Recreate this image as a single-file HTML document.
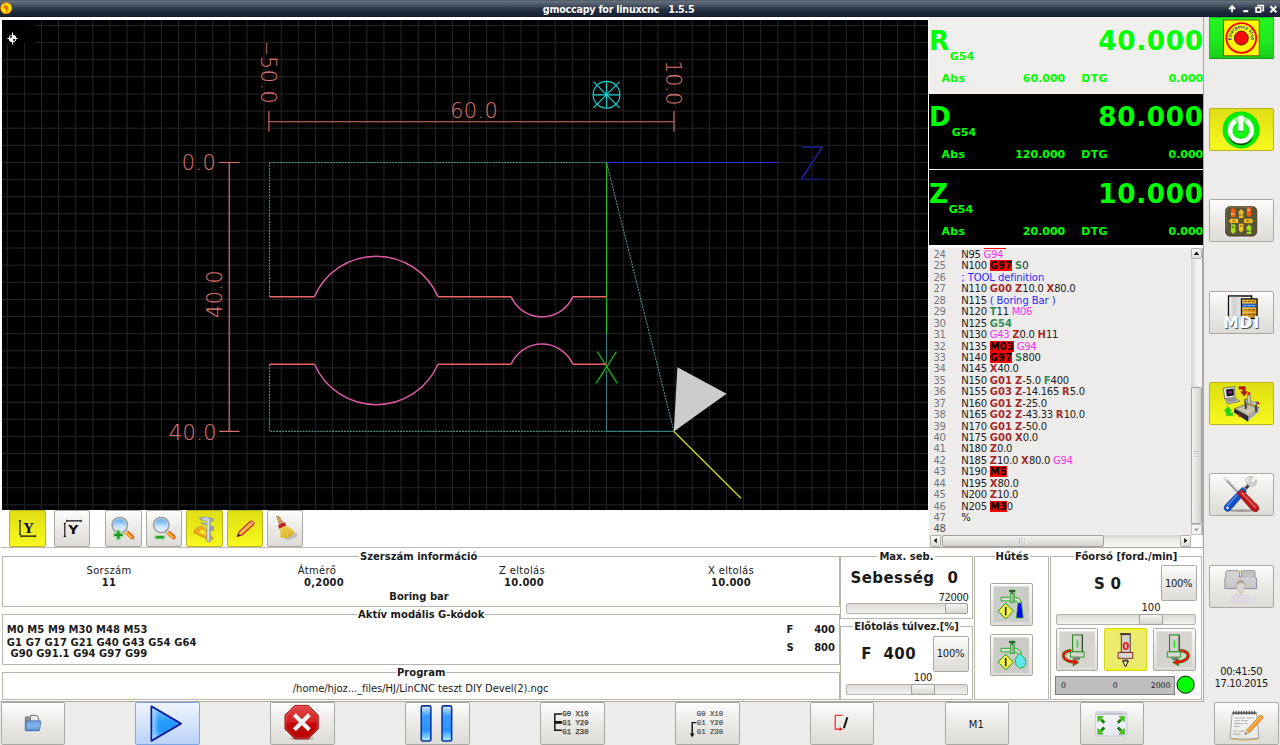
<!DOCTYPE html>
<html lang="hu"><head><meta charset="utf-8"><title>gmoccapy for linuxcnc 1.5.5</title>
<style>
html,body{margin:0;padding:0}
body{width:1280px;height:745px;overflow:hidden;position:relative;background:#edeceb;
 font-family:"DejaVu Sans","Liberation Sans",sans-serif;font-size:10px;color:#1a1a1a}
body>*{position:absolute}
#tb{left:0;top:0;width:1280px;height:17px;background:linear-gradient(#4d5865 0,#626e7b 1.5px,#4a5665 5px,#2a3647 9px,#1c2738 13px,#18233a 15.5px,#0c1524 17px)}
#tb>*{position:absolute}
.appico{left:0;top:0}
#tbt{left:418.6px;top:3.8px;width:400px;text-align:center;color:#fff;font-weight:bold;font-size:9.6px;letter-spacing:-.24px;white-space:pre;text-shadow:0 .6px .6px rgba(0,0,0,.5)}
#tbi{left:1220px;top:0}
#white{left:0;top:17px;width:1203px;height:684px;background:#fff}
#rcol{left:1203px;top:17px;width:77px;height:728px;background:#edeceb}
#ol1{left:1203px;top:17px;width:1px;height:685px;background:#a9a8a4}
#ol2{left:0;top:701px;width:1204px;height:1px;background:#a9a8a4}
#bbar{left:0;top:701px;width:1280px;height:45px;background:#edeceb}
#cv{left:2px;top:20px;width:926px;height:490px;background:#000;overflow:hidden}
#sep1{left:1px;top:547px;width:928px;height:1px;background:#bdbcb6}
#sep2{left:929px;top:547px;width:274px;height:1px;background:#a8a6a1}
.dro{left:928.9px;width:274.4px;height:76px;background:#f0efee;color:#00ff00;font-weight:bold;overflow:hidden}
.dro.dk{background:#000;height:75.6px}
.wl{left:928.9px;width:274.3px;height:1.2px;background:#f4f4f4}
.dro>*{position:absolute;white-space:pre}
.dro .ax{left:0px;top:8.3px;font-size:26.4px;line-height:31px}
.dro .g54{top:33.3px;font-size:11px;line-height:13px}
.dro .big{right:-.5px;top:8.3px;font-size:26.4px;line-height:31px;letter-spacing:.62px}
.dro .lab,.dro .val{top:55.3px;font-size:11px;line-height:13px}
.dro .lab{letter-spacing:.3px}
.btn{box-sizing:border-box;border:1px solid #a9a8a3;border-radius:1.8px;background:linear-gradient(#fdfdfc,#ecebe8 45%,#dddcd8);overflow:hidden}
.btn>svg{position:absolute;left:0;top:0}
.btn.y{background:linear-gradient(#dede14,#eaea18 45%,#f9f920);border-color:#b8b420;border-radius:2px}
.btn.y2{background:#ecec6c;border-color:#d6d620;box-shadow:inset 0 0 0 1.2px #f6f614}
.btn.g{background:linear-gradient(#22f422,#20ea20 55%,#18cc18);border-color:#1ec81e #1ec81e #159a15;border-radius:1px}
.btn.h{background:linear-gradient(#eef4ff,#d6e4fb 50%,#b9d2f7);border-color:#7ea7e6}
.fr{box-sizing:border-box;border:1px solid #b7b6ac;background:#fff}
.ft{position:absolute;top:-6.5px;background:#fff;font-weight:bold;font-size:10px;line-height:12px;padding:0 1px;white-space:pre}
.t{white-space:pre;line-height:12px;font-size:10px}
.t.c{text-align:center}.t.r{text-align:right}.t.b{font-weight:bold}
.big15{font-size:15px;line-height:18px}
.pc{position:absolute;left:0;right:0;top:11.5px;text-align:center;font-size:10px;line-height:12px;letter-spacing:-.3px}
.m1{position:absolute;left:-1.8px;right:0;top:15.6px;text-align:center;font-size:10px;line-height:12px}
.sl{box-sizing:border-box;border:1px solid #b3b2ad;border-radius:2px;background:linear-gradient(#dcdbd7,#f2f1ef)}
.sl>i{position:absolute;top:-1px;bottom:-1px;box-sizing:border-box;border:1px solid #a3a29c;border-radius:2px;background:linear-gradient(#f4f4f2,#d9d8d4)}
.bar{box-sizing:border-box;border:1px solid #7e7e7e;background:#bebebe;font-size:7.8px;letter-spacing:-.1px}
.bar>span{position:absolute;top:4.4px;line-height:10px}
.ledbg{left:1176.3px;top:675.6px;width:19.4px;height:18.9px;background:#f1f0ef}

#code{left:929px;top:247.6px;width:274px;height:299.2px;background:#edecea;overflow:hidden}
#code>*{position:absolute}
#code .ln{left:0;width:16.6px;text-align:right;color:#767676;white-space:pre;letter-spacing:-.36px;font-size:10px}
#code .ln.cur{color:#505050}
#code .cl{left:32.3px;white-space:pre;letter-spacing:-.28px;font-size:10px;color:#1c1c1c}
#code .cm{color:#ff2cf4}
#code .cc{color:#2a2aff;letter-spacing:-.08px}
#code .cr{color:#a52a2a;font-weight:bold;letter-spacing:.1px}
#code .cg{color:#2e8b57;font-weight:bold;letter-spacing:.1px}
#code .ch{background:#fe0000;color:#000;font-weight:bold;letter-spacing:.1px}
#vsb{left:262.4px;top:0;width:10.4px;height:287px;background:linear-gradient(90deg,#d6d5d1,#efeeec 50%,#f6f6f4);border-right:1px solid #a9a8a4}
#vsb>*,#hsb>*{position:absolute;box-sizing:border-box}
.sbb{border:1px solid #b2b1ac;border-radius:1.5px;background:linear-gradient(#fbfbfa,#dedcd8)}
.sbt{border:1px solid #a3a29d;border-radius:2px}
#hsb{left:0;top:287.8px;width:262.2px;height:11.2px;background:linear-gradient(#d6d5d1,#efeeec 50%,#f6f6f4)}
#cnr{left:262.3px;top:287.5px;width:11px;height:12px;background:#fff}

</style></head>
<body>

<div id="tb">
  <svg class="appico" width="18" height="17" viewBox="0 0 18 17"><circle cx="6.2" cy="8.2" r="5.6" fill="#ffee00" stroke="#e46a10" stroke-width=".9"/><text x="5.2" y="9.4" font-size="5.6" font-weight="bold" fill="#ff2400" text-anchor="middle" font-family="DejaVu Sans, Liberation Sans, sans-serif" transform="rotate(28 6.2 8.2)">N</text><text x="8" y="11.6" font-size="5" font-weight="bold" fill="#ff4a00" text-anchor="middle" font-family="DejaVu Sans, Liberation Sans, sans-serif" transform="rotate(28 6.2 8.2)">S</text></svg>
  <div id="tbt">gmoccapy for linuxcnc&nbsp;&nbsp; 1.5.5</div>
  <svg id="tbi" width="60" height="17" viewBox="1220 0 60 17">
    <g fill="none" stroke="#fff" stroke-width="1.9">
      <path d="M1232.1 12.2V6.6M1229.2 9.2l2.9-3 2.9 3" stroke-linejoin="miter"/>
      <path d="M1243.2 11.2h5" stroke-width="2.1"/>
      <path d="M1258.2 6.6v-1.2h5.2v5h-1.4" stroke-width="1.5"/>
      <rect x="1256.1" y="7.6" width="4.6" height="4.4" stroke-width="1.7"/>
      <path d="M1270.4 6.2l6 6M1276.4 6.2l-6 6" stroke-width="2"/>
    </g>
  </svg>
</div><div id="white"></div>
<div id="rcol"></div><div id="bbar"></div><div id="ol1"></div><div id="ol2"></div>
<div id="cv"><svg width="926" height="490" viewBox="2 20 926 490" style="display:block" font-family="DejaVu Sans, Liberation Sans, sans-serif"><path d="M7.28 20V510M24.40 20V510M41.52 20V510M58.64 20V510M75.76 20V510M92.89 20V510M110.01 20V510M127.13 20V510M144.25 20V510M161.37 20V510M178.50 20V510M195.62 20V510M212.74 20V510M229.86 20V510M246.99 20V510M264.11 20V510M281.23 20V510M298.35 20V510M315.47 20V510M332.60 20V510M349.72 20V510M366.84 20V510M383.96 20V510M401.08 20V510M418.21 20V510M435.33 20V510M452.45 20V510M469.57 20V510M486.70 20V510M503.82 20V510M520.94 20V510M538.06 20V510M555.18 20V510M572.31 20V510M589.43 20V510M606.55 20V510M623.67 20V510M640.79 20V510M657.92 20V510M675.04 20V510M692.16 20V510M709.28 20V510M726.40 20V510M743.53 20V510M760.65 20V510M777.77 20V510M794.89 20V510M812.02 20V510M829.14 20V510M846.26 20V510M863.38 20V510M880.50 20V510M897.63 20V510M914.75 20V510M2 25.47H928M2 42.60H928M2 59.72H928M2 76.84H928M2 93.96H928M2 111.08H928M2 128.21H928M2 145.33H928M2 162.45H928M2 179.57H928M2 196.69H928M2 213.82H928M2 230.94H928M2 248.06H928M2 265.18H928M2 282.30H928M2 299.43H928M2 316.55H928M2 333.67H928M2 350.79H928M2 367.92H928M2 385.04H928M2 402.16H928M2 419.28H928M2 436.40H928M2 453.53H928M2 470.65H928M2 487.77H928M2 504.89H928" stroke="#262626" stroke-width="1" fill="none"/><rect x="2" y="20" width="33" height="23" fill="#000" opacity=".88"/><g transform="translate(12.5 38.4)"><circle r="3.75" fill="#fff"/><path d="M-.7 -.7V-2.9A2.3 2.3 0 0 0 -2.9 -.7ZM.7 .7V2.9A2.3 2.3 0 0 0 2.9 .7Z" fill="#000"/><path d="M-5.2 0H5.2M0 -5.9V6.1" stroke="#fff" stroke-width="1"/></g><g fill="none" stroke="#528f8c" stroke-width="1.15" stroke-dasharray="1.9 1.05"><path d="M269.50 296.67V162.45H606.55L673.96 431.39"/><path d="M269.50 364.28V431.39H606.55"/></g><path d="M606.55 333.00V431.39H673.96" fill="none" stroke="#3f7c7c" stroke-width="1.1"/><path d="M606.55 162.45H777.85" stroke="#2e2ed8" stroke-width="1.15"/><path d="M606.55 162.45V333.45" stroke="#24b824" stroke-width="1.3"/><text x="812.1" y="179.6" font-size="45.6" font-weight="200" fill="#3a3aff" stroke="#000" stroke-width="1.0" text-anchor="middle" transform="translate(812.1 0) scale(.83 1) translate(-812.1 0)" style="font-family:'DejaVu Sans Light','DejaVu Sans',sans-serif">Z</text><text x="606.5" y="384.4" font-size="44.4" font-weight="200" fill="#22d422" stroke="#000" stroke-width="0.9" text-anchor="middle" transform="translate(606.5 0) scale(.96 1) translate(-606.5 0)" style="font-family:'DejaVu Sans Light','DejaVu Sans',sans-serif">X</text><path d="M269.50 296.67H314.46M438.02 296.67H511.06M572.84 296.67H606.55" stroke="#ea6460" stroke-width="1.5" fill="none"/><path d="M314.46 296.67A67.41 67.41 0 0 1 438.02 296.67M511.06 296.67A33.70 33.70 0 0 0 572.84 296.67" stroke="#dc5aa6" stroke-width="1.5" fill="none"/><path d="M269.50 364.28H314.46M438.02 364.28H511.06M572.84 364.28H606.55" stroke="#ea6460" stroke-width="1.5" fill="none"/><path d="M314.46 364.28A67.41 67.41 0 0 0 438.02 364.28M511.06 364.28A33.70 33.70 0 0 1 572.84 364.28" stroke="#dc5aa6" stroke-width="1.5" fill="none"/><g stroke="#d9706f" stroke-width="1.15" fill="none"><path d="M268.90 121.7H673.96M268.90 111.3V131.4M673.96 111.3V131.4"/><path d="M229.2 162.45V431.39M219.2 162.45H239.4M219.2 431.39H239.4"/></g><text x="474.2" y="117.5" font-size="20.8" font-weight="200" fill="#d9706f" stroke="#d9706f" stroke-width=".12" text-anchor="middle" style="font-family:'DejaVu Sans Light','DejaVu Sans',sans-serif" letter-spacing="0.45">60.0</text><text x="198.9" y="170.2" font-size="20.8" font-weight="200" fill="#d9706f" stroke="#d9706f" stroke-width=".12" text-anchor="middle" style="font-family:'DejaVu Sans Light','DejaVu Sans',sans-serif" letter-spacing="0.45">0.0</text><text x="192.9" y="439.6" font-size="20.8" font-weight="200" fill="#d9706f" stroke="#d9706f" stroke-width=".12" text-anchor="middle" style="font-family:'DejaVu Sans Light','DejaVu Sans',sans-serif" letter-spacing="0.45">40.0</text><text x="221.8" y="293.9" font-size="20.8" font-weight="200" fill="#d9706f" stroke="#d9706f" stroke-width=".12" text-anchor="middle" transform="rotate(-90 221.8 293.9)" style="font-family:'DejaVu Sans Light','DejaVu Sans',sans-serif" letter-spacing="0.45">40.0</text><text x="261.0" y="80.1" font-size="20.8" font-weight="200" fill="#d9706f" stroke="#d9706f" stroke-width=".12" text-anchor="middle" transform="rotate(90 261.0 80.1)" style="font-family:'DejaVu Sans Light','DejaVu Sans',sans-serif" letter-spacing="0.45">50.0</text><text x="0" y="0" font-size="20.8" font-weight="200" fill="#d9706f" text-anchor="middle" transform="translate(261 48.4) rotate(90) scale(2.05 1)" style="font-family:'DejaVu Sans Light','DejaVu Sans',sans-serif">-</text><text x="665.5" y="82.7" font-size="20.8" font-weight="200" fill="#d9706f" stroke="#d9706f" stroke-width=".12" text-anchor="middle" transform="rotate(90 665.5 82.7)" style="font-family:'DejaVu Sans Light','DejaVu Sans',sans-serif" letter-spacing="-0.4">10.0</text><g stroke="#14d2d2" stroke-width="1.15" fill="none"><circle cx="606.5" cy="94.8" r="13.4"/><path d="M593.1 94.8H619.9M606.5 81.39999999999999V108.2M593.368 81.66799999999999L619.632 107.932M593.368 107.932L619.632 81.66799999999999"/></g><path d="M673.8 431.4L677.4 367.2L726.6 393.8Z" fill="#cccccc"/><path d="M673.9 431.6L741 498.3" stroke="#d2d212" stroke-width="1.4"/></svg></div>

<div class="dro" style="top:17px">
  <span class="ax">R</span><span class="g54" style="left:20.900000000000002px">G54</span>
  <span class="big">40.000</span>
  <span class="lab" style="left:12.6px">Abs</span><span class="val" style="right:138px">60.000</span>
  <span class="lab" style="left:152.4px">DTG</span><span class="val" style="right:0px">0.000</span>
</div>
<div class="dro dk" style="top:93.2px">
  <span class="ax">D</span><span class="g54" style="left:22.900000000000002px">G54</span>
  <span class="big">80.000</span>
  <span class="lab" style="left:12.6px">Abs</span><span class="val" style="right:138px">120.000</span>
  <span class="lab" style="left:152.4px">DTG</span><span class="val" style="right:0px">0.000</span>
</div>
<div class="dro dk" style="top:169.5px">
  <span class="ax">Z</span><span class="g54" style="left:19.900000000000002px">G54</span>
  <span class="big">10.000</span>
  <span class="lab" style="left:12.6px">Abs</span><span class="val" style="right:138px">20.000</span>
  <span class="lab" style="left:152.4px">DTG</span><span class="val" style="right:0px">0.000</span>
</div><div class="wl" style="top:92px;height:2px"></div><div class="wl" style="top:168.8px"></div><div class="wl" style="top:244.9px;height:2.7px;background:#fff"></div>
<div id="code">
<div style="left:54.6px;top:.6px;width:22px;height:1px;background:#fe0000"></div>
<div class="ln" style="top:1.45px;line-height:11.435px">24</div>
<div class="cl" style="top:1.45px;line-height:11.435px">N95 <span class="cm">G94</span></div>
<div class="ln" style="top:12.89px;line-height:11.435px">25</div>
<div class="cl" style="top:12.89px;line-height:11.435px">N100 <span class="ch">G97</span> <span class="cg">S</span>0</div>
<div class="ln" style="top:24.32px;line-height:11.435px">26</div>
<div class="cl" style="top:24.32px;line-height:11.435px"><span class="cc">; TOOL definition</span></div>
<div class="ln" style="top:35.76px;line-height:11.435px">27</div>
<div class="cl" style="top:35.76px;line-height:11.435px">N110 <span class="cr">G00</span> <span class="cr">Z</span>10.0 <span class="cr">X</span>80.0</div>
<div class="ln" style="top:47.19px;line-height:11.435px">28</div>
<div class="cl" style="top:47.19px;line-height:11.435px">N115 <span class="cc">( Boring Bar )</span></div>
<div class="ln" style="top:58.63px;line-height:11.435px">29</div>
<div class="cl" style="top:58.63px;line-height:11.435px">N120 <span class="cg">T</span>11 <span class="cm">M06</span></div>
<div class="ln" style="top:70.06px;line-height:11.435px">30</div>
<div class="cl" style="top:70.06px;line-height:11.435px">N125 <span class="cg">G54</span></div>
<div class="ln" style="top:81.50px;line-height:11.435px">31</div>
<div class="cl" style="top:81.50px;line-height:11.435px">N130 <span class="cm">G43</span> <span class="cr">Z</span>0.0 <span class="cr">H</span>11</div>
<div class="ln" style="top:92.93px;line-height:11.435px">32</div>
<div class="cl" style="top:92.93px;line-height:11.435px">N135 <span class="ch">M03</span> <span class="cm">G94</span></div>
<div class="ln" style="top:104.37px;line-height:11.435px">33</div>
<div class="cl" style="top:104.37px;line-height:11.435px">N140 <span class="ch">G97</span> <span class="cg">S</span>800</div>
<div class="ln" style="top:115.80px;line-height:11.435px">34</div>
<div class="cl" style="top:115.80px;line-height:11.435px">N145 <span class="cr">X</span>40.0</div>
<div class="ln" style="top:127.24px;line-height:11.435px">35</div>
<div class="cl" style="top:127.24px;line-height:11.435px">N150 <span class="cr">G01</span> <span class="cr">Z</span>-5.0 <span class="cg">F</span>400</div>
<div class="ln" style="top:138.67px;line-height:11.435px">36</div>
<div class="cl" style="top:138.67px;line-height:11.435px">N155 <span class="cr">G03</span> <span class="cr">Z</span>-14.165 <span class="cr">R</span>5.0</div>
<div class="ln" style="top:150.11px;line-height:11.435px">37</div>
<div class="cl" style="top:150.11px;line-height:11.435px">N160 <span class="cr">G01</span> <span class="cr">Z</span>-25.0</div>
<div class="ln" style="top:161.54px;line-height:11.435px">38</div>
<div class="cl" style="top:161.54px;line-height:11.435px">N165 <span class="cr">G02</span> <span class="cr">Z</span>-43.33 <span class="cr">R</span>10.0</div>
<div class="ln" style="top:172.98px;line-height:11.435px">39</div>
<div class="cl" style="top:172.98px;line-height:11.435px">N170 <span class="cr">G01</span> <span class="cr">Z</span>-50.0</div>
<div class="ln" style="top:184.41px;line-height:11.435px">40</div>
<div class="cl" style="top:184.41px;line-height:11.435px">N175 <span class="cr">G00</span> <span class="cr">X</span>0.0</div>
<div class="ln" style="top:195.85px;line-height:11.435px">41</div>
<div class="cl" style="top:195.85px;line-height:11.435px">N180 <span class="cr">Z</span>0.0</div>
<div class="ln" style="top:207.28px;line-height:11.435px">42</div>
<div class="cl" style="top:207.28px;line-height:11.435px">N185 <span class="cr">Z</span>10.0 <span class="cr">X</span>80.0 <span class="cm">G94</span></div>
<div class="ln" style="top:218.72px;line-height:11.435px">43</div>
<div class="cl" style="top:218.72px;line-height:11.435px">N190 <span class="ch">M5</span></div>
<div class="ln" style="top:230.15px;line-height:11.435px">44</div>
<div class="cl" style="top:230.15px;line-height:11.435px">N195 <span class="cr">X</span>80.0</div>
<div class="ln" style="top:241.59px;line-height:11.435px">45</div>
<div class="cl" style="top:241.59px;line-height:11.435px">N200 <span class="cr">Z</span>10.0</div>
<div class="ln" style="top:253.02px;line-height:11.435px">46</div>
<div class="cl" style="top:253.02px;line-height:11.435px">N205 <span class="ch">M3</span>0</div>
<div class="ln" style="top:264.46px;line-height:11.435px">47</div>
<div class="cl" style="top:264.46px;line-height:11.435px">%</div>
<div class="ln cur" style="top:275.89px;line-height:11.435px">48</div>
<div id="vsb"><div class="sbb" style="left:0;top:0;width:10.8px;height:11px"></div><svg style="left:0;top:0" width="11" height="11" viewBox="0 0 11 11"><path d="M2.8 6.9L5.5 3.6L8.2 6.9Z" fill="#111"/></svg><div class="sbt" style="left:0;top:139px;width:10.2px;height:137px;background:linear-gradient(90deg,#f3f3f1,#d3d2ce)"></div><svg style="left:0;top:201px" width="11" height="12" viewBox="0 0 11 12"><path d="M2.6 2.5H8M2.6 4.9H8M2.6 7.3H8" stroke="#aaa9a4" stroke-width=".9"/><path d="M2.6 3.4H8M2.6 5.8H8M2.6 8.2H8" stroke="#fff" stroke-width=".9"/></svg><div style="left:0;top:276px;width:10.4px;height:11px;background:#f4f4f2;border:1px solid #c4c3be"></div><svg style="left:0;top:276px" width="11" height="11" viewBox="0 0 11 11"><path d="M2.9 4.4L5.4 7.2L7.9 4.4Z" fill="#9a9a96"/></svg></div>
<div id="hsb"><div class="sbb" style="left:1px;top:0;width:10.8px;height:11.2px"></div><svg style="left:1px;top:0" width="11" height="11" viewBox="0 0 11 11"><path d="M6.8 2.9L3.7 5.6L6.8 8.3Z" fill="#111"/></svg><div class="sbt" style="left:13.2px;top:0;width:162.2px;height:11.2px;background:linear-gradient(#f3f3f1,#d3d2ce)"></div><svg style="left:88px;top:0" width="12" height="11" viewBox="0 0 12 11"><path d="M2.5 2.8V8.4M4.9 2.8V8.4M7.3 2.8V8.4" stroke="#aaa9a4" stroke-width=".9"/><path d="M3.4 2.8V8.4M5.8 2.8V8.4M8.2 2.8V8.4" stroke="#fff" stroke-width=".9"/></svg><div class="sbb" style="left:250.5px;top:0;width:11.3px;height:11.2px"></div><svg style="left:250.5px;top:0" width="11" height="11" viewBox="0 0 11 11"><path d="M4.2 2.9L7.3 5.6L4.2 8.3Z" fill="#111"/></svg></div>
<div id="cnr"></div>
</div><div class="btn g" style="left:1209px;top:17px;width:65px;height:42px"><svg width="63" height="41" viewBox="0 0 63 41"><rect x="13.4" y="2" width="35.8" height="35.8" fill="#ffff00" stroke="#6a4a10" stroke-width=".9"/><circle cx="31.3" cy="20" r="14.9" fill="none" stroke="#ff0000" stroke-width="1.9"/><circle cx="31.3" cy="20.1" r="7" fill="#ff0808" stroke="#4a1a00" stroke-width=".9"/><path id="esp" d="M21.62 22.16A9.9 9.9 0 1 1 40.98 22.16" fill="none"/><text font-size="4.7" font-weight="bold" fill="#3a3ea0" font-family="DejaVu Sans, Liberation Sans, sans-serif" textLength="34.6" lengthAdjust="spacingAndGlyphs"><textPath href="#esp" startOffset=".2" textLength="34.6" lengthAdjust="spacingAndGlyphs">Emergency Stop</textPath></text></svg></div>
<div class="btn y" style="left:1209px;top:108px;width:65px;height:43px"><svg width="63" height="41" viewBox="0 0 63 41"><defs><radialGradient id="pg" cx=".5" cy=".5" r=".5"><stop offset="0" stop-color="#22f822"/><stop offset=".8" stop-color="#04f004"/><stop offset="1" stop-color="#00e400"/></radialGradient><linearGradient id="pgl" x1="0" y1="0" x2="0" y2="1"><stop offset="0" stop-color="#fff" stop-opacity=".75"/><stop offset="1" stop-color="#fff" stop-opacity=".1"/></linearGradient></defs><circle cx="31.1" cy="20.9" r="18.5" fill="url(#pg)"/><path d="M21 25.8A10.8 10.8 0 0 0 40.8 25.8" fill="none" stroke="#042c04" stroke-width="4.6" transform="translate(0 1.7)" opacity=".85"/><path d="M25.4 12.2A10.8 10.8 0 1 0 36.4 12.2" fill="none" stroke="#fff" stroke-width="4.6"/><path d="M17.6 17.4A13.9 13.9 0 0 1 44.2 17.4Q31 9.6 17.6 17.4Z" fill="url(#pgl)"/><rect x="28.4" y="6.7" width="5" height="15.2" fill="#fff"/><rect x="28.4" y="21.9" width="5" height=".8" fill="#0a5a0a" opacity=".6"/></svg></div>
<div class="btn n" style="left:1209px;top:199px;width:65px;height:43px"><svg width="63" height="41" viewBox="0 0 63 41"><rect x="14.4" y="5.5" width="33.6" height="31.8" rx="5" fill="#fff" opacity=".75"/><rect x="15.6" y="6.7" width="31.2" height="29.4" rx="4.2" fill="#5a5436" stroke="#3a3520" stroke-width=".9"/><path d="M16.4 30V11Q16.4 7.5 20 7.5H43" fill="none" stroke="#8a8258" stroke-width=".8" opacity=".8"/><g transform="translate(23.2 12.2) rotate(0)"><path d="M0 -4.8L3 -1.6999999999999997H2.2V4.8H-2.2V-1.6999999999999997H-3Z" fill="#f45a10"/></g><g transform="translate(31.1 13.5) rotate(0)"><path d="M0 -4.4L3 -1.3000000000000003H2.2V4.4H-2.2V-1.3000000000000003H-3Z" fill="#f2bc22"/></g><g transform="translate(39 12.4) rotate(180)"><path d="M0 -4.8L3 -1.6999999999999997H2.2V4.8H-2.2V-1.6999999999999997H-3Z" fill="#f45a10"/></g><g transform="translate(23.4 20.9) rotate(-90)"><path d="M0 -4.8L3 -1.6999999999999997H2.2V4.8H-2.2V-1.6999999999999997H-3Z" fill="#f2bc22"/></g><g transform="translate(38.8 20.9) rotate(90)"><path d="M0 -4.8L3 -1.6999999999999997H2.2V4.8H-2.2V-1.6999999999999997H-3Z" fill="#f2bc22"/></g><g transform="translate(23.2 29.2) rotate(180)"><path d="M0 -4.8L3 -1.6999999999999997H2.2V4.8H-2.2V-1.6999999999999997H-3Z" fill="#a4e018"/></g><g transform="translate(31.1 28.2) rotate(180)"><path d="M0 -4.4L3 -1.3000000000000003H2.2V4.4H-2.2V-1.3000000000000003H-3Z" fill="#f2bc22"/></g><g transform="translate(39 29.2) rotate(0)"><path d="M0 -4.8L3 -1.6999999999999997H2.2V4.8H-2.2V-1.6999999999999997H-3Z" fill="#a4e018"/></g><g font-size="2.7" font-weight="bold" text-anchor="middle" font-family="DejaVu Sans, Liberation Sans, sans-serif"><text x="23.2" y="14.8" fill="#fff">Z+</text><text x="31.1" y="15.6" fill="#5a4a10">Y+</text><text x="39" y="11.4" fill="#fff">Z-</text><text x="24" y="21.9" fill="#3a3010">X-</text><text x="38.2" y="21.9" fill="#3a3010">X+</text><text x="23.2" y="28.2" fill="#3a5a08">A-</text><text x="31.1" y="27.4" fill="#5a4a10">Y-</text><text x="39" y="32" fill="#2a4a08">A+</text></g></svg></div>
<div class="btn n" style="left:1209px;top:291px;width:65px;height:43px"><svg width="63" height="41" viewBox="0 0 63 41"><defs><linearGradient id="mdp" x1="0" y1="0" x2="1" y2="0"><stop offset="0" stop-color="#f2f2f2"/><stop offset=".35" stop-color="#cfcfcf"/><stop offset="1" stop-color="#e6e6e6"/></linearGradient><linearGradient id="mdo" x1="0" y1="0" x2="1" y2="1"><stop offset="0" stop-color="#f6cc60"/><stop offset=".5" stop-color="#e8a428"/><stop offset="1" stop-color="#b87410"/></linearGradient></defs><path d="M18.6 28V4H41.6V7" fill="none" stroke="#0a0a0a" stroke-width="1.5"/><rect x="19.4" y="4.8" width="12" height="23" fill="url(#mdp)"/><rect x="31.5" y="6.9" width="15.6" height="19.6" fill="url(#mdo)" stroke="#0a0a0a" stroke-width="1.3"/><rect x="32.2" y="11.6" width="14.2" height="3.7" fill="#1e62c8"/><path d="M33.6 9.4h11.4M33.6 17.8h11.4M33.6 22.4h11.4" stroke="#5a3a08" stroke-width="1" stroke-dasharray="3 1.1" opacity=".75"/><path d="M33.6 13.5h11.4" stroke="#cfe0ff" stroke-width=".8" stroke-dasharray="3 1.1" opacity=".8"/><path d="M32.2 16.2h14.2M32.2 20.4h14.2" stroke="#fbe6a8" stroke-width=".6" opacity=".8"/><text x="32.5" y="37" font-size="15.6" font-weight="bold" fill="#1a1a1a" text-anchor="middle" font-family="DejaVu Sans, Liberation Sans, sans-serif" opacity=".78" letter-spacing=".9">MDI</text><text x="31.7" y="36.1" font-size="15.6" font-weight="bold" fill="#fff" text-anchor="middle" font-family="DejaVu Sans, Liberation Sans, sans-serif" letter-spacing=".9">MDI</text></svg></div>
<div class="btn y" style="left:1209px;top:382px;width:65px;height:43px"><svg width="63" height="41" viewBox="0 0 63 41"><path d="M13.2 5.3L24.6 3.6L24.9 14.7L14.8 15.7Z" fill="#ececec" stroke="#4a4a4a" stroke-width=".7"/><path d="M16 6.6L23.6 5.4L23.9 12.6L16.8 13.6Z" fill="#14141e"/><path d="M18.6 8.2L21.8 7.7L22 10.6L18.8 11.1Z" fill="#8a1e9a"/><path d="M14.8 15.7L24.9 14.7L30 18.4L17.6 21.1Z" fill="#b4b8c0" stroke="#5a5a5a" stroke-width=".6"/><path d="M16.6 16.6L24.4 15.8L27 17.6L18.4 19Z" fill="#8a8e96"/><path d="M28.9 3.6H35.4V8.6H37.6L34 13.2L30.6 8.6H32.8V6.2H28.9Z" fill="#b81414" stroke="#8a0a0a" stroke-width=".3"/><path d="M22.8 32.6H16.2V28.2H14.2L17.9 23.4L21.6 28.2H19.6V29.8H22.8Z" fill="#14d814" stroke="#0a9a0a" stroke-width=".3"/><path d="M24.6 25.7L36.3 21L49.1 24.7L37.7 32.8Z" fill="#cfc8aa" stroke="#3a3a3a" stroke-width=".6"/><path d="M28 25.6L36.6 22.2L45.6 24.8L37.4 30.6Z" fill="#ddd8c0" stroke="#8a8670" stroke-width=".4"/><path d="M31 24.4L40.4 27.6M34 23.2L43.2 26.2M30.4 27.2L39 23M33.4 29L42.4 24" stroke="#8a8670" stroke-width=".4"/><path d="M24.6 25.7L37.7 32.8V38.4L24.6 29.8Z" fill="#2e2e32"/><path d="M37.7 32.8L49.1 24.7V28.6L37.7 38.4Z" fill="#c4c4c8"/><path d="M38.4 34.2L48.6 26.8M38.4 36.2L48.6 28.2" stroke="#6a6a70" stroke-width=".6"/><path d="M24.8 26.4V30M37.7 33V38.2" stroke="#1a1a1a" stroke-width="1.2"/><path d="M34.2 16.6L36.2 15.4L37 25.4L35 26.6Z" fill="#3e3e44"/><path d="M44.6 19.2L46.8 18.2L47.4 28.4L45.2 29.6Z" fill="#3e3e44"/><path d="M35.4 16.4L46.6 19.6L46.8 22.4L35.6 19.2Z" fill="#c8c8cc" stroke="#4a4a4a" stroke-width=".4"/><path d="M37.2 11.6L40.4 12.4L40.8 21.4L37.6 20.4Z" fill="#cdc6a8" stroke="#4a4a4a" stroke-width=".5"/><circle cx="39" cy="10.6" r="1.5" fill="#d41a1a"/><circle cx="48" cy="20.2" r="1.4" fill="#d41a1a"/><path d="M28.4 30.6L30.4 31.8V34.6L28.4 33.4Z" fill="#d41a1a"/></svg></div>
<div class="btn n" style="left:1209px;top:473px;width:65px;height:43px"><svg width="63" height="41" viewBox="0 0 63 41"><defs><linearGradient id="tlb" x1="0" y1="0" x2="1" y2="1"><stop offset="0" stop-color="#3a7af0"/><stop offset=".5" stop-color="#1450c8"/><stop offset="1" stop-color="#0a3aa0"/></linearGradient><linearGradient id="tlr" x1="1" y1="0" x2="0" y2="1"><stop offset="0" stop-color="#e84040"/><stop offset=".5" stop-color="#c01818"/><stop offset="1" stop-color="#8a0c0c"/></linearGradient></defs><ellipse cx="31.4" cy="36.6" rx="13" ry="1.3" fill="#000" opacity=".3"/><path d="M14.6 4L28.6 18.6" stroke="#8e8e8e" stroke-width="2.3" stroke-linecap="round"/><path d="M15.4 4L28.8 18" stroke="#e2e2e2" stroke-width=".9"/><path d="M13.8 3L16.6 6" stroke="#f4f4f4" stroke-width="1.8" stroke-linecap="round"/><path d="M34.4 15.2L39.4 10.4" stroke="#8a8a8a" stroke-width="3.6"/><path d="M36 14.4L38.6 11.8" stroke="#3a3a3a" stroke-width="2.2"/><path d="M36.6 8.2Q34.4 4.4 38.8 2.6Q41.6 1.8 43.4 3.2L40.2 5.8L41.2 8.6L44.6 8.8L46 5.4Q47.4 8 45.6 10.8Q43.2 13.6 39.4 12.4Z" fill="#d4d4d4" stroke="#9a9a9a" stroke-width=".5"/><path d="M37.4 7.6Q36 5 38.8 3.6" stroke="#fff" stroke-width="1" fill="none"/><path d="M32.4 13.2L36.6 17.2L20.4 36.2Q17.6 38.6 15 36.2Q12.8 33.4 15.6 30.6Z" fill="url(#tlb)" stroke="#0a3290" stroke-width=".5"/><path d="M31.6 16.4L17.4 31.6" stroke="#6aa0ff" stroke-width="1.3" stroke-linecap="round" opacity=".8"/><circle cx="17.5" cy="34" r="1.3" fill="#e8f0ff"/><path d="M27.2 19.6L31.8 15.4L48 31.8Q50.2 35 47.4 37.2Q44.2 38.8 41.6 36Z" fill="url(#tlr)" stroke="#7a0c0c" stroke-width=".5"/><path d="M32 19.4L45.6 33.6" stroke="#ff9a9a" stroke-width="1.3" stroke-linecap="round" opacity=".7"/><path d="M30.6 16.6L34.6 20.6" stroke="#ff7070" stroke-width="1" opacity=".6"/></svg></div>
<div class="btn n" style="left:1209px;top:565px;width:65px;height:43px"><svg width="63" height="41" viewBox="0 0 63 41"><defs><linearGradient id="usf" x1="0" y1="0" x2="0" y2="1"><stop offset="0" stop-color="#d8d8d8"/><stop offset="1" stop-color="#c6c6c6"/></linearGradient></defs><path d="M14.9 22.6V12.4Q14.9 11.4 15.9 11.4V6.4Q15.9 4.7 17.6 4.7H27.8Q29.5 4.7 29.5 6.4V11.2H31.4V6.4Q31.4 4.7 33.1 4.7H43.3Q45 4.7 45 6.4V11.4Q46.6 11.4 46.6 12.6V22.6Z" fill="url(#usf)" stroke="#8e8e9c" stroke-width="1"/><path d="M32.6 6.2H43.6V10.6H32.6Z" fill="#c2c2c2" stroke="#a2a2aa" stroke-width=".5"/><path d="M30.2 4.4L30.8 6.4L31.4 4.4" stroke="#e8b040" stroke-width=".8" fill="none"/><path d="M20.8 35.6Q21.4 29.8 27.6 28.4L30.8 29.6L34 28.4Q40.4 29.8 41 35.6Q31 37.6 20.8 35.6Z" fill="#dcdce2" stroke="#c4c4d0" stroke-width=".5"/><path d="M28.8 24H32.8V29.4L30.8 30.2L28.8 29.4Z" fill="#d8d0cc"/><ellipse cx="30.8" cy="20.4" rx="4" ry="5.9" fill="#ddd6d2" stroke="#b8b0ac" stroke-width=".5"/><path d="M26.8 19.4Q26.6 14.2 30.8 14Q35 14.2 34.8 19.4Q33.4 16.8 30.8 17Q28.2 16.8 26.8 19.4Z" fill="#a8a096"/><path d="M44.2 30v1.2M44.2 33v1.4M44.2 36v.8" stroke="#c0c0c0" stroke-width=".7"/></svg></div>
<div class="btn y" style="left:9.3px;top:510.3px;width:36.6px;height:36.3px"><svg width="35" height="35" viewBox="0 0 35 35"><text x="18.5" y="21.7" font-size="14.8" font-weight="bold" fill="#0a0a30" text-anchor="middle" font-family="Liberation Serif, DejaVu Serif, serif">Y</text><path d="M10 9.8V23.2M8.9 9.8h2.2M8.9 23.2h2.2" stroke="#111" stroke-width="1.15" fill="none"/><path d="M11 25.1H25.5M11 24v2.2M25.5 24v2.2" stroke="#111" stroke-width="1.15" fill="none"/></svg></div>
<div class="btn n" style="left:53.7px;top:510.3px;width:36.2px;height:36.3px"><svg width="35" height="35" viewBox="0 0 35 35"><text x="0" y="0" font-size="11.5" font-weight="bold" fill="#111" text-anchor="middle" font-family="DejaVu Sans, Liberation Sans, sans-serif" transform="translate(18.3 22.6) scale(1.22 1)">Y</text><path d="M9.8 12.2V25.3M8.7 12.2h2.2M8.7 25.3h2.2" stroke="#111" stroke-width="1.15" fill="none"/><path d="M11.8 9.9H26.2M11.8 8.8v2.2M26.2 8.8v2.2" stroke="#111" stroke-width="1.15" fill="none"/></svg></div>
<div class="btn n" style="left:105.4px;top:510.3px;width:36.2px;height:36.3px"><svg width="35" height="35" viewBox="0 0 35 35"><defs><linearGradient id="zg1" x1="0" y1="0" x2="0" y2="1"><stop offset="0" stop-color="#5aa6f2"/><stop offset=".5" stop-color="#a6d2fa"/><stop offset="1" stop-color="#e4f2ff"/></linearGradient></defs><path d="M19.6 20.4L26.0 26.2" stroke="#e8501a" stroke-width="4.4" stroke-linecap="round"/><path d="M19.3 20.8L25.6 26.5" stroke="#f7b020" stroke-width="2.5" stroke-linecap="round"/><path d="M18.2 18.6L20.8 21.2" stroke="#d8d8d8" stroke-width="3.6"/><circle cx="13.8" cy="14.1" r="7.6" fill="url(#zg1)" stroke="#9c9c9c" stroke-width="1.7"/><circle cx="13.8" cy="14.1" r="6.6" fill="none" stroke="#e4eef8" stroke-width=".6"/><ellipse cx="13.8" cy="16.6" rx="5.4" ry="3.6" fill="#fff" opacity=".3"/><path d="M7.6 22.2h3.1v-3.1h3.4v3.1h3.1v3.4h-3.1v3.1h-3.4v-3.1H7.6Z" fill="#159415" stroke="#a6d8a6" stroke-width="1.3" stroke-linejoin="round"/></svg></div>
<div class="btn n" style="left:145.8px;top:510.3px;width:36.2px;height:36.3px"><svg width="35" height="35" viewBox="0 0 35 35"><defs><linearGradient id="zg2" x1="0" y1="0" x2="0" y2="1"><stop offset="0" stop-color="#5aa6f2"/><stop offset=".5" stop-color="#a6d2fa"/><stop offset="1" stop-color="#e4f2ff"/></linearGradient></defs><path d="M20.0 20.4L26.4 26.2" stroke="#e8501a" stroke-width="4.4" stroke-linecap="round"/><path d="M19.7 20.8L26.0 26.5" stroke="#f7b020" stroke-width="2.5" stroke-linecap="round"/><path d="M18.599999999999998 18.6L21.2 21.2" stroke="#d8d8d8" stroke-width="3.6"/><circle cx="14.2" cy="14.1" r="7.6" fill="url(#zg2)" stroke="#9c9c9c" stroke-width="1.7"/><circle cx="14.2" cy="14.1" r="6.6" fill="none" stroke="#e4eef8" stroke-width=".6"/><ellipse cx="14.2" cy="16.6" rx="5.4" ry="3.6" fill="#fff" opacity=".3"/><rect x="8" y="24.6" width="9.8" height="3.4" rx="1.2" fill="#159415" stroke="#a6d8a6" stroke-width="1.3"/></svg></div>
<div class="btn y" style="left:186.2px;top:510.3px;width:36.6px;height:36.3px"><svg width="35" height="35" viewBox="0 0 35 35"><defs><linearGradient id="cal" x1="0" y1="0" x2="1" y2="0"><stop offset="0" stop-color="#8c9cac"/><stop offset=".45" stop-color="#d4dee8"/><stop offset="1" stop-color="#8090a0"/></linearGradient></defs><path d="M6.2 21.4Q8.4 15.6 15.6 15.2L26.6 27.4L23.4 29.4Z" fill="#f0a81a" stroke="#d88c0c" stroke-width=".7" stroke-linejoin="round"/><path d="M11.6 21.4Q13 18.8 16 18.6L20.6 24.4Z" fill="#f4ec20"/><path d="M8.6 22.6l.8-1M11 24l.8-1M13.4 25.2l.8-1M15.8 26.4l.8-1M18.2 27.6l.8-1M20.6 28.6l.8-1" stroke="#b87408" stroke-width=".7"/><path d="M12.2 7.4Q14 5.6 19 5.9L25.8 7.6L26.2 10.2L23.4 9.6V30.2Q21.6 31.4 19.8 30.2V10.4L13.2 8.6Z" fill="url(#cal)" stroke="#7888a0" stroke-width=".6" stroke-linejoin="round"/><path d="M13.8 11.4L19.8 12.6V14.4L14.2 12.8Z" fill="#a8b6c6" stroke="#7888a0" stroke-width=".5"/><path d="M23.4 15.6H26.6V19.4H23.4Z" fill="#94a4b6" stroke="#7888a0" stroke-width=".5"/><path d="M21.2 8.6V29.6" stroke="#eef3f8" stroke-width=".9"/></svg></div>
<div class="btn y" style="left:226.6px;top:510.3px;width:36.6px;height:36.3px"><svg width="35" height="35" viewBox="0 0 35 35"><path d="M9.2 25.6L11 21L21.6 11Q23.6 9.4 25.2 10.8Q26.6 12.4 25 14.2L14 24Z" fill="#f8b428" stroke="#cc2020" stroke-width="1.1" stroke-linejoin="round"/><path d="M12.4 21.6L22.4 12.2" stroke="#fde6a0" stroke-width="1"/><path d="M22 10.8Q23.8 9.6 25.2 10.9Q26.4 12.4 25.2 14L22 10.8Z" fill="#f4dcd0" stroke="#cc2020" stroke-width=".6"/><path d="M9.2 25.6L10.4 22.4L12.6 24.4Z" fill="#2a2a2a"/></svg></div>
<div class="btn n" style="left:267.1px;top:510.3px;width:36.2px;height:36.3px"><svg width="35" height="35" viewBox="0 0 35 35"><defs><linearGradient id="brm" x1="0" y1="0" x2="1" y2="1"><stop offset="0" stop-color="#f4dc68"/><stop offset=".6" stop-color="#e6c23a"/><stop offset="1" stop-color="#c8a020"/></linearGradient></defs><ellipse cx="23.4" cy="25.6" rx="6.4" ry="2.6" fill="#000" opacity=".16" transform="rotate(-20 23.4 25.6)"/><path d="M8.4 5.4Q10.2 4.2 11.6 6L15 12.2L11.8 14Z" fill="#c8904a" stroke="#a87030" stroke-width=".5"/><path d="M9.6 6L13.4 12.6" stroke="#e0b078" stroke-width="1"/><path d="M10.2 14.6L16.6 11.4L18 14.4L11.6 17.8Z" fill="#cc2020" stroke="#901010" stroke-width=".4"/><path d="M11.6 17.8L18 14.4Q24.6 17.2 26.6 21.6Q23 26.2 17.6 27.2Q14 27.4 12.2 26.4Q12.6 21.6 11.6 17.8Z" fill="url(#brm)"/><path d="M13.6 18.4Q14.6 22.6 14.2 26.6M15.6 17.4Q17.6 21.8 17.6 26.6M17.4 16.4Q21 20.6 21.8 25" stroke="#c09a20" stroke-width=".6" fill="none" opacity=".8"/></svg></div>
<div id="sep1"></div><div id="sep2"></div>

<div class="fr" style="left:2px;top:556px;width:838px;height:51px"><span class="ft" style="left:356px">Szerszám információ</span></div>
<div class="t c" style="left:59px;top:565.1px;width:100px;letter-spacing:.3px">Sorszám</div>
<div class="t c b" style="left:59px;top:577.1px;width:100px;letter-spacing:.2px">11</div>
<div class="t c" style="left:267px;top:565.1px;width:100px;letter-spacing:.3px">Átmérő</div>
<div class="t c b" style="left:274px;top:577.1px;width:100px;letter-spacing:.2px">0,2000</div>
<div class="t c" style="left:472px;top:565.1px;width:100px;letter-spacing:.3px">Z eltolás</div>
<div class="t c b" style="left:474px;top:577.1px;width:100px;letter-spacing:.2px">10.000</div>
<div class="t c" style="left:681px;top:565.1px;width:100px;letter-spacing:.3px">X eltolás</div>
<div class="t c b" style="left:681px;top:577.1px;width:100px;letter-spacing:.2px">10.000</div>
<div class="t c b" style="left:369px;top:590.7px;width:100px">Boring bar</div>

<div class="fr" style="left:2px;top:614px;width:838px;height:51px"><span class="ft" style="left:354px">Aktív modális G-kódok</span></div>
<div class="t b" style="left:6.8px;top:623.8px;letter-spacing:.05px">M0 M5 M9 M30 M48 M53</div>
<div class="t b" style="left:6.8px;top:636.9px;letter-spacing:.08px">G1 G7 G17 G21 G40 G43 G54 G64</div>
<div class="t b" style="left:10.4px;top:648.0px;letter-spacing:.08px">G90 G91.1 G94 G97 G99</div>
<div class="t b" style="left:786.5px;top:624.3px">F</div><div class="t b r" style="left:785px;top:624.3px;width:50px">400</div>
<div class="t b" style="left:786.5px;top:642.0px">S</div><div class="t b r" style="left:785px;top:642.0px;width:50px">800</div>

<div class="fr" style="left:2px;top:672px;width:838px;height:28px"><span class="ft" style="left:393px">Program</span></div>
<div class="t c" style="left:170.7px;top:682.6px;width:500px;letter-spacing:-.06px">/home/hjoz..._files/HJ/LinCNC teszt DIY Devel(2).ngc</div>

<div class="fr" style="left:840px;top:556px;width:133px;height:63px"><span class="ft" style="left:37.4px">Max. seb.</span></div>
<div class="t b big15" style="left:850.6px;top:569.1px;letter-spacing:.4px;word-spacing:-1.25px">Sebesség&nbsp;&nbsp; 0</div>
<div class="t r" style="left:900px;top:591.9px;width:68.6px;letter-spacing:-.32px">72000</div>
<div class="sl" style="left:846.4px;top:603.3px;width:122px;height:11.1px"><i style="left:97.5px;width:23.5px"></i></div>

<div class="fr" style="left:840px;top:626px;width:133px;height:74px"><span class="ft" style="left:12.2px;letter-spacing:-.06px">Előtolás túlvez.[%]</span></div>
<div class="t b big15" style="left:861.2px;top:645px;letter-spacing:.5px">F&nbsp; 400</div>
<div class="btn n" style="left:932.5px;top:635.7px;width:36px;height:36px"><span class="pc">100%</span></div>
<div class="t c" style="left:898px;top:672.4px;width:50px;letter-spacing:-.2px">100</div>
<div class="sl" style="left:846.4px;top:684.3px;width:122px;height:11.1px"><i style="left:63.6px;width:23.6px"></i></div>

<div class="fr" style="left:974px;top:556px;width:75px;height:144px"><span class="ft" style="left:19.6px">Hűtés</span></div>
<div class="btn n" style="left:990.3px;top:583.4px;width:42.5px;height:42.3px"><svg width="40.5" height="40.5" viewBox="0 0 40.5 40.5"><rect x="2.4" y="2.4" width="35.6" height="35.6" fill="#cbcbc8"/><path d="M18 7H24.4" stroke="#12a812" stroke-width="2.4"/><path d="M18.4 7H24" stroke="#2a2a2a" stroke-width="1.2"/><path d="M21.2 7.4V10" stroke="#3a3a3a" stroke-width="1.4"/><path d="M10 13.3H24.4Q27.8 13.5 29.4 16.2L30.4 18.8L27.2 19.6L26.4 17.6Q25.8 16.9 24.4 16.9H10Z" fill="#dededa" stroke="#12a812" stroke-width=".9" stroke-linejoin="round"/><rect x="19.4" y="9.6" width="3.8" height="9" fill="#a4a4a0" stroke="#12a812" stroke-width=".8"/><path d="M20.4 10.4V18" stroke="#d4d4d0" stroke-width=".8"/><path d="M27 19.1H30.4L32.2 33.9H25.4Z" fill="#0808f0" stroke="#12a812" stroke-width=".7"/><path d="M14.7 19.3L22.5 27.1L14.7 34.9L6.9 27.1Z" fill="#f6f04a" stroke="#0a8a0a" stroke-width=".9"/><path d="M14.7 22.9V31.3" stroke="#111" stroke-width="1.5"/></svg></div>
<div class="btn n" style="left:990.3px;top:633.6px;width:42.5px;height:42.4px"><svg width="40.5" height="40.5" viewBox="0 0 40.5 40.5"><rect x="2.4" y="2.4" width="35.6" height="35.6" fill="#cbcbc8"/><path d="M18 7H24.4" stroke="#12a812" stroke-width="2.4"/><path d="M18.4 7H24" stroke="#2a2a2a" stroke-width="1.2"/><path d="M21.2 7.4V10" stroke="#3a3a3a" stroke-width="1.4"/><path d="M10 13.3H24.4Q27.8 13.5 29.4 16.2L30.4 18.8L27.2 19.6L26.4 17.6Q25.8 16.9 24.4 16.9H10Z" fill="#dededa" stroke="#12a812" stroke-width=".9" stroke-linejoin="round"/><rect x="19.4" y="9.6" width="3.8" height="9" fill="#a4a4a0" stroke="#12a812" stroke-width=".8"/><path d="M20.4 10.4V18" stroke="#d4d4d0" stroke-width=".8"/><path d="M28.6 18.6Q27.4 20 25.6 21.6Q23.6 24.4 24.6 27.6Q24.4 30.4 26.6 31.6Q28.6 33.8 31 32.8Q33.6 32.6 34.4 29.8Q35.6 27 34.2 24.4Q33.4 21.4 30.8 20.6Q29.6 19.2 28.6 18.6Z" fill="#62e6f0" stroke="#12a812" stroke-width=".8"/><path d="M14.7 19.3L22.5 27.1L14.7 34.9L6.9 27.1Z" fill="#f6f04a" stroke="#0a8a0a" stroke-width=".9"/><path d="M14.7 22.9V31.3" stroke="#111" stroke-width="1.5"/></svg></div>

<div class="fr" style="left:1050px;top:556px;width:152px;height:144px"><span class="ft" style="left:23px">Főorsó [ford./min]</span></div>
<div class="t b big15" style="left:1093.9px;top:575.2px;letter-spacing:.3px">S 0</div>
<div class="btn n" style="left:1160.6px;top:565.4px;width:36px;height:36px"><span class="pc">100%</span></div>
<div class="t c" style="left:1126px;top:601.5px;width:50px">100</div>
<div class="sl" style="left:1056px;top:614.1px;width:140.4px;height:11.2px"><i style="left:82px;width:23.8px"></i></div>
<div class="btn n" style="left:1055.6px;top:628.1px;width:42.1px;height:42.5px"><svg width="40.2" height="40.5" viewBox="0 0 40.2 40.5"><rect x="2.4" y="2.4" width="35.4" height="35.7" fill="#d5d4cf"/><path d="M14.2 21.4Q6 22.6 6.4 27Q7.4 32.2 17.4 33.2" fill="none" stroke="#0a9a0a" stroke-width="3.3"/><path d="M16.4 29.2L22 33.4L16 36.8Z" fill="#f01414" stroke="#0a9a0a" stroke-width=".7"/><path d="M14.2 21.4Q6 22.6 6.4 27Q7.4 32.2 17.4 33.2" fill="none" stroke="#f01414" stroke-width="2.3"/><rect x="15.6" y="5.9" width="9.7" height="17" fill="#d2d2cc" stroke="#0a7a0a" stroke-width=".9"/><path d="M25.3 6V22.8" stroke="#2a2a2a" stroke-width=".8"/><path d="M20.45 11.7V18.8" stroke="#18e818" stroke-width="1.5"/><rect x="13.6" y="22.9" width="13.5" height="5.2" fill="#d8d8d2" stroke="#0a8a0a" stroke-width=".8"/><path d="M17.1 28.3H23.5L22.6 31.1H18.0Z" fill="#7c7c7c"/></svg></div>
<div class="btn y2" style="left:1104.1px;top:628.1px;width:42.8px;height:42.5px"><svg width="40.8" height="40.5" viewBox="0 0 40.8 40.5"><rect x="1.6" y="1.6" width="37.6" height="37.3" fill="#ecec6c"/><path d="M14.9 4.9H25.7" stroke="#3a0a0a" stroke-width="1.3"/><rect x="16.3" y="5.6" width="8.9" height="17.8" fill="#d2d2cc" stroke="#2a2a2a" stroke-width=".9"/><text x="20.8" y="20.8" font-size="10.4" font-weight="bold" fill="#f41414" text-anchor="middle" font-family="DejaVu Sans, Liberation Sans, sans-serif">0</text><rect x="13.1" y="23.4" width="14.7" height="5.9" fill="#d8d8d2" stroke="#8a1010" stroke-width=".9"/><path d="M17.2 29.4H23.7L23 31.9H17.9Z" fill="#8c8c8c"/><path d="M17.6 32H23.4L20.5 38Z" fill="#f4f0a0" stroke="#1a0a0a" stroke-width="1"/></svg></div>
<div class="btn n" style="left:1153.3px;top:628.1px;width:42.4px;height:42.5px"><svg width="40.2" height="40.5" viewBox="0 0 40.2 40.5"><rect x="2.4" y="2.4" width="35.4" height="35.7" fill="#d5d4cf"/><path d="M26.4 21.4Q34.6 22.6 34.2 27Q33.2 32.2 23.2 33.2" fill="none" stroke="#0a9a0a" stroke-width="3.3"/><path d="M24.2 29.2L18.6 33.4L24.6 36.8Z" fill="#f01414" stroke="#0a9a0a" stroke-width=".7"/><path d="M26.4 21.4Q34.6 22.6 34.2 27Q33.2 32.2 23.2 33.2" fill="none" stroke="#f01414" stroke-width="2.3"/><rect x="15.5" y="5.9" width="9.7" height="17" fill="#d2d2cc" stroke="#0a7a0a" stroke-width=".9"/><path d="M25.2 6V22.8" stroke="#2a2a2a" stroke-width=".8"/><path d="M20.35 11.7V18.8" stroke="#18e818" stroke-width="1.5"/><rect x="13.2" y="22.9" width="13.5" height="5.2" fill="#d8d8d2" stroke="#0a8a0a" stroke-width=".8"/><path d="M17.0 28.3H23.4L22.5 31.1H17.9Z" fill="#7c7c7c"/></svg></div>
<div class="bar" style="left:1055.4px;top:676px;width:119.5px;height:19px"><span style="left:4.6px">0</span><span style="left:0;right:0;text-align:center">0</span><span style="right:3.6px">2000</span></div>
<div class="ledbg"></div>
<svg style="position:absolute;left:1174px;top:673px" width="24" height="24" viewBox="1174 673 24 24"><circle cx="1185.6" cy="684.7" r="8.6" fill="#00ff00" stroke="#000" stroke-width="0.9"/></svg>
<div class="btn n" style="left:0.5px;top:702px;width:64.4px;height:43px"><svg width="62" height="41" viewBox="0 0 62 41"><defs><linearGradient id="fof" x1="0" y1="0" x2="0" y2="1"><stop offset="0" stop-color="#6a9ede"/><stop offset=".5" stop-color="#8ab4e8"/><stop offset=".85" stop-color="#6a9cdc"/><stop offset="1" stop-color="#3465a8"/></linearGradient><linearGradient id="fob" x1="0" y1="0" x2="1" y2="0"><stop offset="0" stop-color="#7a7a7a"/><stop offset="1" stop-color="#b8b8b8"/></linearGradient></defs><path d="M23.2 27.2V14.6Q23.2 13.8 24 13.8H27.4L28.4 15H30V27.2Z" fill="url(#fob)" stroke="#6a6a6a" stroke-width=".5"/><path d="M28.4 18.4V12.4H33.6Q36.6 13 37 18.4Z" fill="#fbfbfb" stroke="#4a4a4a" stroke-width=".8"/><path d="M29.6 14.6h3.6M29.6 16.2h5.2" stroke="#c4c4c4" stroke-width=".6"/><path d="M25 17.8H38.4Q38.9 17.8 38.8 18.4L37.6 27Q37.5 27.8 36.8 27.8H24.2Q23.5 27.8 23.6 27L24.4 18.4Q24.5 17.8 25 17.8Z" fill="url(#fof)" stroke="#3a68ae" stroke-width=".7"/></svg></div>
<div class="btn h" style="left:135.4px;top:702px;width:64.4px;height:43px"><svg width="62" height="41" viewBox="0 0 62 41"><defs><linearGradient id="plg" x1="0" y1="0" x2="0" y2="1"><stop offset="0" stop-color="#8ccaff"/><stop offset=".42" stop-color="#2a9cff"/><stop offset=".7" stop-color="#2096ff"/><stop offset="1" stop-color="#7ad8ff"/></linearGradient><linearGradient id="plh" x1="0" y1="0" x2="1" y2="0"><stop offset="0" stop-color="#fff" stop-opacity=".55"/><stop offset=".25" stop-color="#fff" stop-opacity="0"/></linearGradient></defs><path d="M15.4 3.3L45 20.6L15.4 37.9Z" fill="url(#plg)" stroke="#0a1c9c" stroke-width="1.8" stroke-linejoin="round"/><path d="M16.4 5.2L43 20.6L16.4 36.2Z" fill="url(#plh)"/></svg></div>
<div class="btn n" style="left:270.4px;top:702px;width:64.4px;height:43px"><svg width="62" height="41" viewBox="0 0 62 41"><defs><linearGradient id="stg" x1="0" y1="0" x2="0" y2="1"><stop offset="0" stop-color="#e04848"/><stop offset=".5" stop-color="#d42020"/><stop offset=".52" stop-color="#c80808"/><stop offset="1" stop-color="#b40404"/></linearGradient></defs><ellipse cx="31" cy="35.4" rx="12" ry="1.8" fill="#000" opacity=".2"/><path d="M23.9 2.4H37.3L47.2 12.3V25.9L37.3 35.8H23.9L14 25.9V12.3Z" fill="url(#stg)" stroke="#a00808" stroke-width="1"/><path d="M24.3 3.4H36.9L46.2 12.7V25.5L36.9 34.8H24.3L15 25.5V12.7Z" fill="none" stroke="#f08080" stroke-width=".6" opacity=".7"/><path d="M23.4 11.8L38.3 26.7M38.3 11.8L23.4 26.7" stroke="#f2f2f2" stroke-width="4.1" stroke-linecap="butt"/></svg></div>
<div class="btn n" style="left:405.3px;top:702px;width:64.4px;height:43px"><svg width="62" height="41" viewBox="0 0 62 41"><defs><linearGradient id="pag" x1="0" y1="0" x2="0" y2="1"><stop offset="0" stop-color="#e0f0ff"/><stop offset=".28" stop-color="#3c9cff"/><stop offset=".7" stop-color="#2a94ff"/><stop offset="1" stop-color="#b8f4ff"/></linearGradient></defs><rect x="15.25" y="2.85" width="9.6" height="35.2" rx="1.6" fill="url(#pag)" stroke="#0a369c" stroke-width="1.6"/><rect x="36.05" y="2.85" width="9.6" height="35.2" rx="1.6" fill="url(#pag)" stroke="#0a369c" stroke-width="1.6"/></svg></div>
<div class="btn n" style="left:540.2px;top:702px;width:64.4px;height:43px"><svg width="62" height="41" viewBox="0 0 62 41"><path d="M20.8 10.9H13.8V27.3H20.8M13.8 18.7H20.8M13.8 19.9H20.8" fill="none" stroke="#111" stroke-width="1.45"/><g font-size="7.3" fill="#3c3c3c" font-family="Liberation Mono, DejaVu Sans Mono, monospace" stroke="#3c3c3c" stroke-width=".25"><text x="21.3" y="12.9">G0 X10</text><text x="21.3" y="21.9">G1 Y20</text><text x="21.3" y="30.9">G1 Z30</text></g></svg></div>
<div class="btn n" style="left:675.2px;top:702px;width:64.4px;height:43px"><svg width="62" height="41" viewBox="0 0 62 41"><path d="M20.4 19.6H16.2V31.4" fill="none" stroke="#111" stroke-width="1.45"/><path d="M13.9 30.4L16.2 34.6L18.5 30.4Z" fill="#111"/><g font-size="7.3" fill="#4a4a4a" font-family="Liberation Mono, DejaVu Sans Mono, monospace" stroke="#4a4a4a" stroke-width=".2"><text x="20.8" y="12.9">G0 X10</text><text x="20.8" y="21.9">G1 Y20</text><text x="20.8" y="30.9">G1 Z30</text></g></svg></div>
<div class="btn n" style="left:810.1px;top:702px;width:64.4px;height:43px"><svg width="62" height="41" viewBox="0 0 62 41"><path d="M31.9 12.2H24.2V26.1H29" fill="none" stroke="#f01818" stroke-width="1.1"/><path d="M28.6 24.1L31.8 26.1L28.6 28.1Z" fill="#f01818"/><path d="M36.3 14.2L32.9 25.2" stroke="#111" stroke-width="2"/></svg></div>
<div class="btn n" style="left:945.0px;top:702px;width:64.4px;height:43px"><span class="m1">M1</span></div>
<div class="btn n" style="left:1079.9px;top:702px;width:64.4px;height:43px"><svg width="62" height="41" viewBox="0 0 62 41"><defs><linearGradient id="fuw" x1="0" y1="0" x2="0" y2="1"><stop offset="0" stop-color="#f6f6fa"/><stop offset="1" stop-color="#e6e8f2"/></linearGradient></defs><rect x="14.6" y="8.9" width="31.2" height="24" rx="1.6" fill="url(#fuw)" stroke="#c2c6da" stroke-width=".9"/><path d="M15.2 11.9V10.4Q15.2 9.4 16.2 9.4H44.2Q45.2 9.4 45.2 10.4V11.9Z" fill="#c6c6d0"/><path d="M16 10.2H20M42 10.2H44.4" stroke="#e4e4ea" stroke-width=".7"/><g transform="translate(16.7 13.2) scale(1 1)"><path d="M2.6 4.6L4.6 2.6L7.6 5.6L5.6 7.6Z" fill="#1c7c0c"/><path d="M0 0H5.6L3.9 2L4.9 3L3 4.9L2 3.9L0 5.6Z" fill="#46c41c" stroke="#2c9c10" stroke-width=".4"/></g><g transform="translate(43.5 13.2) scale(-1 1)"><path d="M2.6 4.6L4.6 2.6L7.6 5.6L5.6 7.6Z" fill="#1c7c0c"/><path d="M0 0H5.6L3.9 2L4.9 3L3 4.9L2 3.9L0 5.6Z" fill="#46c41c" stroke="#2c9c10" stroke-width=".4"/></g><g transform="translate(16.7 31.2) scale(1 -1)"><path d="M2.6 4.6L4.6 2.6L7.6 5.6L5.6 7.6Z" fill="#1c7c0c"/><path d="M0 0H5.6L3.9 2L4.9 3L3 4.9L2 3.9L0 5.6Z" fill="#46c41c" stroke="#2c9c10" stroke-width=".4"/></g><g transform="translate(43.5 31.2) scale(-1 -1)"><path d="M2.6 4.6L4.6 2.6L7.6 5.6L5.6 7.6Z" fill="#1c7c0c"/><path d="M0 0H5.6L3.9 2L4.9 3L3 4.9L2 3.9L0 5.6Z" fill="#46c41c" stroke="#2c9c10" stroke-width=".4"/></g></svg></div>
<div class="btn n" style="left:1214.3px;top:702px;width:64.4px;height:43px"><svg width="62" height="41" viewBox="0 0 62 41"><defs><linearGradient id="edp" x1="0" y1="0" x2="0" y2="1"><stop offset="0" stop-color="#fdfdfc"/><stop offset="1" stop-color="#e6e6e2"/></linearGradient></defs><path d="M15.2 35.4Q29.4 37.8 43.8 35.4L43.6 36.2Q29.4 38.8 15.4 36.2Z" fill="#e8a030"/><path d="M17.3 9.6H41.5L43.9 35.3Q29.4 37.2 15 35.3Z" fill="url(#edp)" stroke="#8e8e8a" stroke-width=".8"/><path d="M17.6 10.2H41.2" stroke="#6a6a6a" stroke-width="1.4"/><path d="M18.6 8V11.6M21.2 8V11.6M23.8 8V11.6M26.4 8V11.6M29 8V11.6M31.6 8V11.6M34.2 8V11.6M36.8 8V11.6M39.4 8V11.6" stroke="#3a3a3a" stroke-width=".9"/><path d="M18.3 8.2Q19 7.2 19.6 8.4M20.9 8.2Q21.6 7.2 22.2 8.4M23.5 8.2Q24.2 7.2 24.8 8.4M26.1 8.2Q26.8 7.2 27.4 8.4M28.7 8.2Q29.4 7.2 30 8.4M31.3 8.2Q32 7.2 32.6 8.4M33.9 8.2Q34.6 7.2 35.2 8.4M36.5 8.2Q37.2 7.2 37.8 8.4M39.1 8.2Q39.8 7.2 40.4 8.4" stroke="#8a8a8a" stroke-width=".6" fill="none"/><path d="M19.4 15H30M31.4 15H39M19.2 17.8H25M26.4 17.8H33M19 20.6H28.4M29.8 20.6H32.6M18.8 23.4H24.6M18.4 28.2H22M23.4 28.2H29.4M18.2 31H25.6" stroke="#9a9a98" stroke-width=".8"/><path d="M31.6 27L44.8 12.6Q46.2 11.8 47.4 13Q48.4 14.2 47.6 15.6L34.4 29.8Z" fill="#f59a26" stroke="#c87010" stroke-width=".6"/><path d="M33 27.2L45.8 13.4" stroke="#fbd08a" stroke-width="1"/><path d="M31.6 27L34.4 29.8L29.8 31.4Z" fill="#f0d8b0" stroke="#a0784a" stroke-width=".4"/><path d="M29.8 31.4L30.9 29.5L31.8 30.7Z" fill="#222"/></svg></div>
<div class="t c" style="left:1211.3px;top:666.4px;width:60px;line-height:11.6px;letter-spacing:-.36px">00:41:50<br>17.10.2015</div>
</body></html>
